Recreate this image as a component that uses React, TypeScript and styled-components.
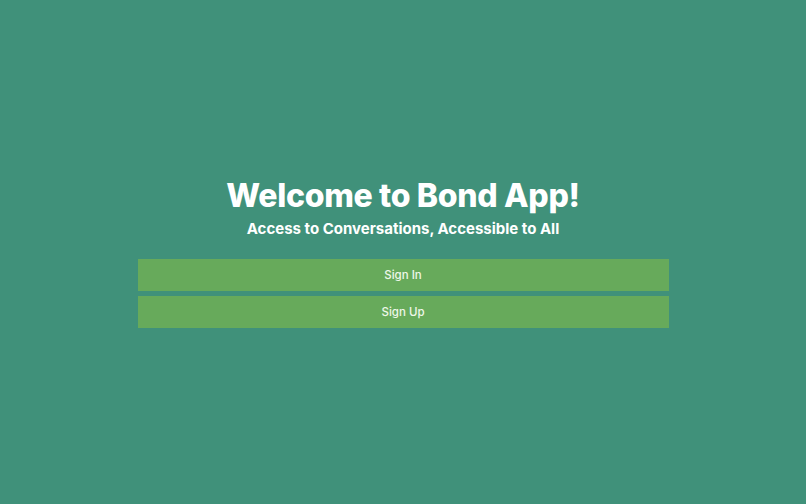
import styled, { createGlobalStyle } from 'styled-components'

const GlobalStyle = createGlobalStyle`
  html, body, #root {
    margin: 0;
    height: 100%;
  }
  body {
    font-family: 'Inter', 'Noto Sans', sans-serif;
    background-color: #40917a;
  }
`

export default function App() {
  return (
    <>
      <GlobalStyle />
      <Page>
        <Panel>
          <Title>Welcome to Bond App!</Title>
          <Subtitle>Access to Conversations, Accessible to All</Subtitle>
          <Actions>
            <ActionButton>Sign In</ActionButton>
            <ActionButton>Sign Up</ActionButton>
          </Actions>
        </Panel>
      </Page>
    </>
  )
}

const Page = styled.div`
  height: 100%;
  box-sizing: border-box;
  padding-top: 1px;
  display: flex;
  align-items: center;
  justify-content: center;
  background-color: #40917a;
`

const Panel = styled.div`
  width: 531px;
  display: flex;
  flex-direction: column;
  align-items: center;
`

const Title = styled.h1`
  margin: 0;
  font-size: 32px;
  font-weight: 800;
  letter-spacing: -0.01em;
  color: #ffffff;
  line-height: 1.2;
`

const Subtitle = styled.h2`
  margin: 4px 0 0 0;
  font-size: 15px;
  font-weight: 700;
  color: #ffffff;
  line-height: 1.3;
`

const Actions = styled.div`
  width: 100%;
  margin-top: 21px;
  display: flex;
  flex-direction: column;
  gap: 5px;
`

const ActionButton = styled.button`
  height: 32px;
  width: 100%;
  border: none;
  border-radius: 0;
  background-color: #67aa5b;
  color: #eef7e8;
  font-family: 'Inter', 'Noto Sans', sans-serif;
  font-size: 11.5px;
  font-weight: 500;
  cursor: pointer;
`
